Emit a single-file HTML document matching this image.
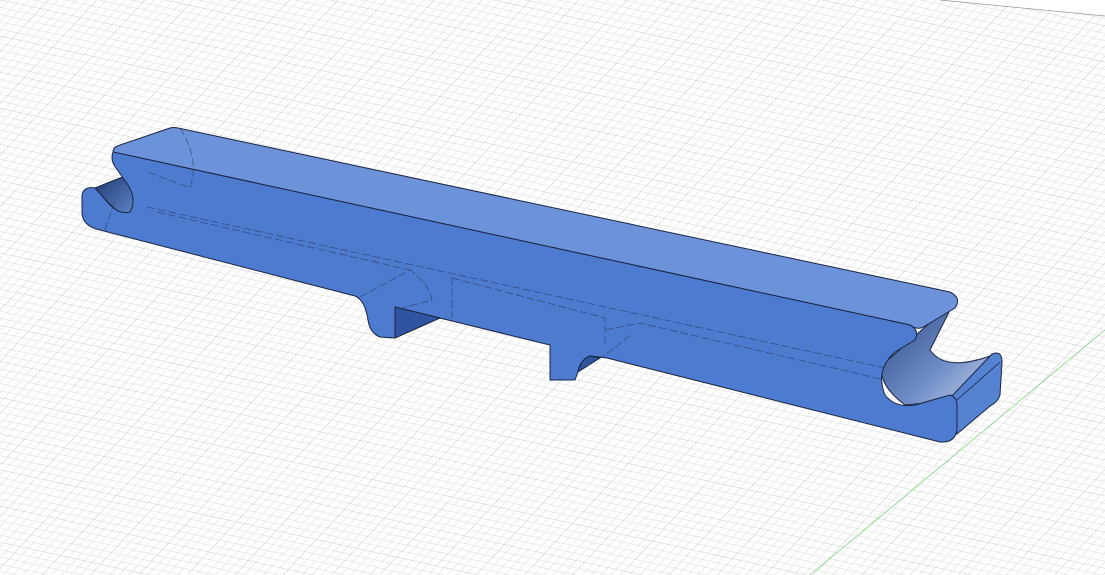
<!DOCTYPE html>
<html><head><meta charset="utf-8"><style>
html,body{margin:0;padding:0;background:#fff;overflow:hidden}
svg{display:block}
</style></head><body>
<svg width="1105" height="575" viewBox="0 0 1105 575" xmlns="http://www.w3.org/2000/svg">
<defs>
<pattern id="gp" width="40" height="40" patternUnits="userSpaceOnUse" patternTransform="matrix(1,0.22,0.7,-0.75,0,0)">
<path d="M0,8H40M0,16H40M0,24H40M0,32H40M8,0V40M16,0V40M24,0V40M32,0V40" stroke="#e4e4e4" stroke-width="0.8" fill="none"/>
<path d="M0,0H40M0,0V40" stroke="#c6c6c6" stroke-width="1" fill="none"/>
</pattern>
<linearGradient id="cav" x1="0" y1="0" x2="1" y2="1">
<stop offset="0" stop-color="#27457f"/><stop offset="0.6" stop-color="#6f8ec8"/><stop offset="1" stop-color="#c9d4ea"/>
</linearGradient>
<linearGradient id="cavL" x1="0" y1="0" x2="1" y2="1">
<stop offset="0" stop-color="#1e3a72"/><stop offset="1" stop-color="#5f84c8"/>
</linearGradient>
</defs>
<rect width="1105" height="575" fill="#fff"/>
<rect width="1105" height="575" fill="url(#gp)"/>
<path d="M940,0 L1105,0 L1105,16 Z" fill="#fff"/>
<line x1="940" y1="0" x2="1105" y2="16" stroke="#999" stroke-width="0.8"/>
<line x1="810" y1="575" x2="1105" y2="330" stroke="#7fd67f" stroke-width="0.8"/>
<g stroke="#1a2540" stroke-width="1" stroke-linejoin="round">
<path d="M95,188 L125,176 Q138,195 133,210 Q128,218 118,212 L95,190 Z" fill="url(#cavL)"/>
<path d="M905,345 L955,300 L930,350 Q945,372 990,356 L957,400 L905,405 Q878,385 882,365 Z" fill="url(#cav)"/>
<path d="M950,398 L992,354 Q1002,350 1002,362 L1000,395 Q998,402 990,406 L957,434 Z" fill="#5583d2"/>
<line x1="957" y1="400" x2="1000" y2="362" stroke-width="0.8"/>
<path d="M178,128 L950,292 Q962,298 955,308 L925,326 Q918,331 910,325 L113,152 Q113,147 120,145 L170,128 Q174,127 178,128 Z" fill="#6c92da"/>
<path d="M113,152 L910,325 Q920,330 915,340 L895,352 Q875,370 885,395 Q895,408 915,405 L950,395 Q957,397 957,405 L957,430 Q955,443 940,442 L607,358 L590,356 Q580,360 578,372 L575,380 L550,380 L550,345 L395,307 L395,338 L380,337 Q370,333 368,320 Q365,300 355,296 L100,230 Q82,226 82,212 L82,195 Q84,186 95,188 L110,205 Q120,215 130,212 Q137,200 128,185 L116,168 Q110,160 113,152 Z" fill="#4d7bcf"/>
<path d="M395,307 L440,318 L395,338 Z" fill="#2f55a0"/>
<path d="M578,372 L600,358 L590,356 Q580,360 578,372 Z" fill="#2f55a0"/>
</g>
<g stroke="#2a3a60" stroke-width="0.8" stroke-dasharray="8,3" fill="none" opacity="0.7">
<path d="M147,207 L885,368"/>
<path d="M157,212 L410,270"/>
<path d="M105,230 L115,200"/>
<path d="M180,128 Q200,160 190,188 L148,172"/>
<path d="M360,297 L410,270 Q430,285 432,300 L395,310"/>
<path d="M452,278 L452,318"/>
<path d="M452,278 L605,318 L605,345"/>
<path d="M605,330 L640,323 L885,380"/>
<path d="M630,335 Q620,345 600,358"/>
</g>
</svg>
</body></html>
